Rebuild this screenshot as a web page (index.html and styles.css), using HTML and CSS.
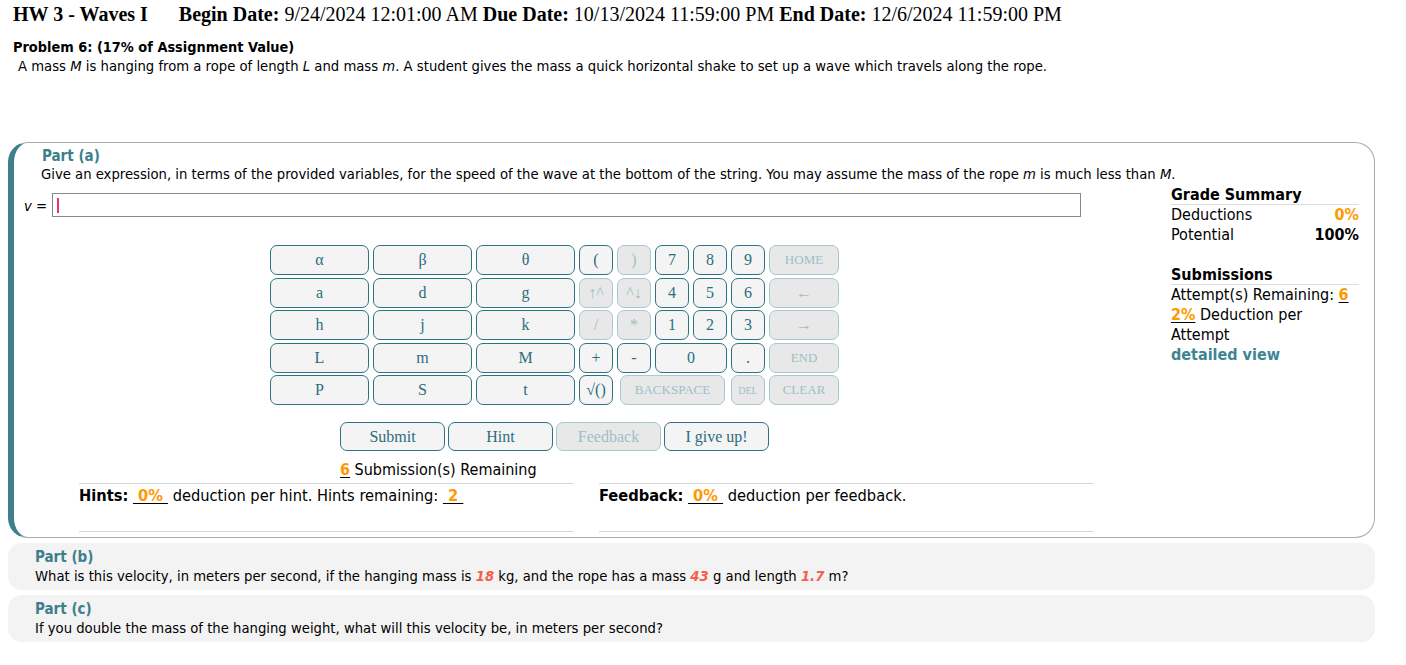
FILE: index.html
```html
<!DOCTYPE html>
<html lang="en">
<head>
  <meta charset="UTF-8">
  <title>HW 3 - Waves I</title>
  <link rel="stylesheet" href="styles.css">
</head>
<body>
  <div class="header">
    <span class="hw-title">HW 3 - Waves I</span>
    <span><b>Begin Date:</b> 9/24/2024 12:01:00 AM <b>Due Date:</b> 10/13/2024 11:59:00 PM <b>End Date:</b> 12/6/2024 11:59:00 PM</span>
  </div>

  <div class="problem">
    <div class="problem-title">Problem 6: (17% of Assignment Value)</div>
    <div class="problem-text">A mass <i>M</i> is hanging from a rope of length <i>L</i> and mass <i>m</i>. A student gives the mass a quick horizontal shake to set up a wave which travels along the rope.</div>
  </div>

  <!-- Part (a), the open part -->
  <div class="part-open">
    <div class="part-main">
      <div class="part-label">Part (a)</div>
      <div class="part-desc">Give an expression, in terms of the provided variables, for the speed of the wave at the bottom of the string. You may assume the mass of the rope <i>m</i> is much less than <i>M</i>.</div>

      <div class="answer-row">
        <span class="var"><i>v</i> =</span>
        <div class="answer-box"><span class="caret"></span></div>
      </div>

      <div class="keypad">
        <button class="key">α</button>
        <button class="key">β</button>
        <button class="key">θ</button>
        <button class="key">(</button>
        <button class="key off">)</button>
        <button class="key">7</button>
        <button class="key">8</button>
        <button class="key">9</button>
        <button class="key off small">HOME</button>

        <button class="key">a</button>
        <button class="key">d</button>
        <button class="key">g</button>
        <button class="key off">↑^</button>
        <button class="key off">^↓</button>
        <button class="key">4</button>
        <button class="key">5</button>
        <button class="key">6</button>
        <button class="key off">←</button>

        <button class="key">h</button>
        <button class="key">j</button>
        <button class="key">k</button>
        <button class="key off">/</button>
        <button class="key off">*</button>
        <button class="key">1</button>
        <button class="key">2</button>
        <button class="key">3</button>
        <button class="key off">→</button>

        <button class="key">L</button>
        <button class="key">m</button>
        <button class="key">M</button>
        <button class="key">+</button>
        <button class="key">-</button>
        <button class="key span2">0</button>
        <button class="key">.</button>
        <button class="key off small">END</button>

        <button class="key">P</button>
        <button class="key">S</button>
        <button class="key">t</button>
        <button class="key">√()</button>
        <button class="key off small span3">BACKSPACE</button>
        <button class="key off tiny">DEL</button>
        <button class="key off small">CLEAR</button>
      </div>

      <div class="actions">
        <button class="act">Submit</button>
        <button class="act">Hint</button>
        <button class="act off">Feedback</button>
        <button class="act">I give up!</button>
      </div>

      <div class="remaining"><span class="val">6</span> Submission(s) Remaining</div>

      <div class="help-row">
        <div class="help-col"><b>Hints:</b> <span class="val">&nbsp;0%&nbsp;</span> deduction per hint. Hints remaining: <span class="val">&nbsp;2&nbsp;</span></div>
        <div class="help-col"><b>Feedback:</b> <span class="val">&nbsp;0%&nbsp;</span> deduction per feedback.</div>
      </div>
    </div>

    <div class="side">
      <div class="side-head">Grade Summary</div>
      <div class="side-row"><span>Deductions</span><span class="orange">0%</span></div>
      <div class="side-row"><span>Potential</span><b>100%</b></div>

      <div class="side-head gap">Submissions</div>
      <div>Attempt(s) Remaining: <span class="val">6</span></div>
      <div><span class="val">2%</span> Deduction per Attempt</div>
      <div class="detail">detailed view</div>
    </div>
  </div>

  <div class="part-closed">
    <div class="part-label">Part (b)</div>
    <div class="part-closed-text">What is this velocity, in meters per second, if the hanging mass is <span class="num">18</span> kg, and the rope has a mass <span class="num">43</span> g and length <span class="num">1.7</span> m?</div>
  </div>

  <div class="part-closed">
    <div class="part-label">Part (c)</div>
    <div class="part-closed-text">If you double the mass of the hanging weight, what will this velocity be, in meters per second?</div>
  </div>
</body>
</html>
```

FILE: styles.css
```css
body {
  margin: 0;
  padding: 0 31px 0 8px;
  font-family: "DejaVu Sans Condensed", "DejaVu Sans", sans-serif;
  font-size: 14.7px;
  color: #000;
  background: #fff;
}
.header {
  font-family: "Liberation Serif", serif;
  font-size: 20px;
  padding: 2px 0 0 5px;
  line-height: 24px;
}
.hw-title {
  font-weight: bold;
  margin-right: 26px;
}
.problem {
  margin-top: 12px;
  padding-left: 5px;
}
.problem-title {
  font-weight: bold;
  font-size: 14.4px;
  line-height: 18px;
}
.problem-text {
  padding-left: 5px;
  line-height: 20px;
}
.part-open {
  margin-top: 66px;
  display: flex;
  border: 1px solid #aaa;
  border-left: 6px solid #3d7f8a;
  border-radius: 20px;
  height: 396px;
  box-sizing: border-box;
}
.part-main {
  flex: 1;
  min-width: 0;
}
.part-label {
  color: #3e7f8c;
  font-weight: bold;
  font-size: 15px;
  line-height: 17px;
}
.part-open .part-label {
  margin: 5px 0 0 28px;
}
.part-desc {
  margin-left: 27px;
  line-height: 17px;
  white-space: nowrap;
}
.answer-row {
  display: flex;
  align-items: center;
  margin: 11px 0 0 10px;
}
.var {
  width: 28px;
}
.answer-box {
  width: 1023px;
  height: 22px;
  border: 1px solid #888;
  display: flex;
  align-items: center;
  padding-left: 4px;
}
.caret {
  width: 2px;
  height: 15px;
  background: #e8317c;
}
.keypad {
  display: grid;
  grid-template-columns: 99px 99px 99px 34px 34px 34px 34px 34px 70px;
  grid-auto-rows: 30px;
  gap: 2.5px 4px;
  margin: 28px 0 0 256px;
}
button {
  font-family: "Liberation Serif", serif;
  font-size: 16px;
  color: #2b6e7f;
  background: #f4f4f4;
  border: 1.5px solid #2f7282;
  border-radius: 7px;
  padding: 0;
  cursor: pointer;
}
button.off {
  color: #9cbfc7;
  background: #e8e8e8;
  border-color: #a9c7cd;
}
.key.small {
  font-size: 13px;
}
.key.tiny {
  font-size: 10px;
}
.span2 {
  grid-column: span 2;
}
.span3 {
  grid-column: span 3;
  margin: 0 2px 0 3px;
}
.actions {
  display: flex;
  gap: 3px;
  margin: 17px 0 0 326px;
}
.act {
  width: 105px;
  height: 29px;
}
.remaining {
  font-size: 16px;
  margin: 10px 0 0 326px;
  line-height: 18px;
}
.val {
  color: #ff9900;
  font-weight: bold;
  text-decoration: underline;
  text-decoration-color: #000;
  text-underline-offset: 2px;
}
.orange {
  color: #ff9900;
  font-weight: bold;
}
.help-row {
  display: flex;
  gap: 25px;
  margin: 4px 0 0 65px;
}
.help-col {
  width: 495px;
  height: 49px;
  box-sizing: border-box;
  border-top: 1px solid #d6d6d6;
  border-bottom: 1px solid #d6d6d6;
  font-size: 16.3px;
  padding-top: 2px;
  line-height: 20px;
}
.side {
  width: 188px;
  flex: none;
  margin: 42px 15px 0 0;
  font-size: 16px;
  line-height: 20px;
}
.side-head {
  font-weight: bold;
  border-bottom: 1px solid #ddd;
  line-height: 19px;
}
.side-head.gap {
  margin-top: 20px;
}
.side-row {
  display: flex;
  justify-content: space-between;
}
.detail {
  color: #3e8593;
  font-weight: bold;
}
.part-closed {
  margin-top: 5px;
  background: #f3f3f3;
  border-radius: 14px;
  padding: 6px 0 6px 27px;
  height: 35px;
}
.part-closed-text {
  font-size: 14.7px;
  line-height: 19px;
}
.num {
  color: #f4604a;
  font-weight: bold;
  font-style: italic;
}
```
